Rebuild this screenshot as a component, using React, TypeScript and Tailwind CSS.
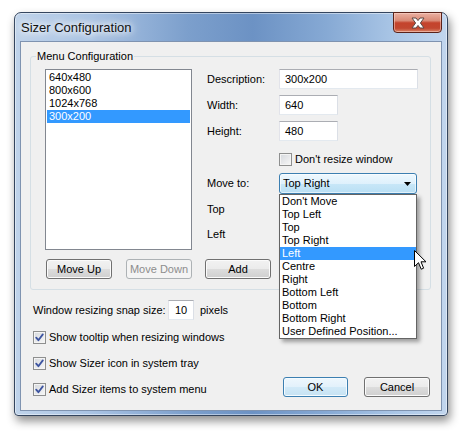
import React from "react";

function CheckBox({ checked }: { checked?: boolean }) {
  return (
    <span className="flex h-[13px] w-[13px] shrink-0 items-center justify-center border border-[#8e8f8f] bg-[linear-gradient(135deg,#d5d8dd,#f7f7f7)] shadow-[inset_0_0_0_1px_#f4f4f4]">
      {checked && (
        <svg width="9" height="9" viewBox="0 0 9 9">
          <path d="M1.2 4.6 L3.4 7.2 L7.8 1.4" fill="none" stroke="#3d54a0" strokeWidth="1.8" strokeLinejoin="round" strokeLinecap="round" />
        </svg>
      )}
    </span>
  );
}

function Btn({ children, kind, className }: { children: React.ReactNode; kind?: "normal" | "disabled" | "default"; className: string }) {
  const k = kind || "normal";
  const base = "flex h-[20px] items-center justify-center rounded-[3px] leading-[13px] ";
  const style =
    k === "disabled"
      ? "border border-[#adb2b5] bg-[#f4f4f4] text-[#8d8d8d]"
      : k === "default"
      ? "border border-[#3c7fb1] bg-[linear-gradient(#eef7fd,#e2f1fb_50%,#d2eaf8_50%,#c6e2f3)] shadow-[inset_0_0_0_1px_#f4fbff] text-black"
      : "border border-[#707070] bg-[linear-gradient(#f2f2f2,#ebebeb_50%,#dddddd_50%,#cfcfcf)] shadow-[inset_0_0_0_1px_#fbfbfb] text-black";
  return <div className={base + style + " " + className}>{children}</div>;
}

function TextBox({ value, className }: { value: string; className: string }) {
  return (
    <div className={"flex h-[20px] items-center border border-[#abadb3] border-l-[#e2e3ea] border-r-[#dbdfe6] border-b-[#e3e9ef] bg-white leading-[13px] " + className}>
      {value}
    </div>
  );
}

export default function App() {
  const sizes = ["640x480", "800x600", "1024x768", "300x200"];
  const moves = [
    "Don't Move",
    "Top Left",
    "Top",
    "Top Right",
    "Left",
    "Centre",
    "Right",
    "Bottom Left",
    "Bottom",
    "Bottom Right",
    "User Defined Position...",
  ];
  return (
    <div className="h-[432px] w-[464px] overflow-hidden bg-white pl-[14px] pt-[12px] font-['Liberation_Sans',Arial,sans-serif] text-[11px] text-black">
      {/* window */}
      <div className="flex h-[404px] w-[434px] flex-col rounded-b-[4px] rounded-t-[7px] border border-[#34455e] bg-[linear-gradient(90deg,#bfd3ea_0%,#a9c3e3_18%,#7c9fcc_40%,#6c92c4_55%,#86a9d4_72%,#aac6e6_88%,#c2d6ee_100%)] shadow-[inset_0_0_0_1px_rgba(255,255,255,0.45),2px_5px_10px_rgba(0,0,0,0.45)]">
        {/* title bar */}
        <div className="flex h-[28px] items-start justify-between">
          <span className="ml-[6px] mt-[7px] text-[13px] leading-[16px] text-[#111] [text-shadow:0_0_6px_#fff,0_0_10px_#fff,0_0_14px_#fff]">
            Sizer Configuration
          </span>
          <div className="-mt-px mr-[5px] flex h-[21px] w-[49px] items-center justify-center rounded-b-[4px] border border-[#5a2219] bg-[linear-gradient(#eab0a2,#d98a76_40%,#c4432c_52%,#c24730_80%,#d98567)] shadow-[inset_0_0_0_1px_rgba(255,220,210,0.5)]">
            <svg width="16" height="12" viewBox="0 0 16 12">
              <path d="M2 1 L6 1 L8 3.6 L10 1 L14 1 L10.4 6 L14 11 L10 11 L8 8.4 L6 11 L2 11 L5.6 6 Z" fill="#fff" stroke="#5d4a46" strokeWidth="1" strokeLinejoin="round" />
            </svg>
          </div>
        </div>
        {/* client area */}
        <div className="mx-[5px] flex h-[370px] w-[422px] flex-col border border-[#7f93b0] bg-[#f0f0f0]">
          {/* group box */}
          <div className="ml-[9px] mt-[14px] flex h-[234px] w-[401px] flex-col rounded-[3px] border border-[#d5dfe5]">
            <span className="-mt-[8px] ml-[5px] w-fit bg-[#f0f0f0] px-[1px] leading-[15px]">Menu Configuration</span>
            <div className="ml-[14px] mt-[5px] flex">
              {/* list box */}
              <div className="h-[181px] w-[147px] border border-[#828790] bg-white p-px">
                {sizes.map((s, i) => (
                  <div key={s} className={i === 3 ? "h-[13px] bg-[#3399ff] pl-[2px] leading-[13px] text-white" : "h-[13px] pl-[2px] leading-[13px]"}>
                    {s}
                  </div>
                ))}
              </div>
              {/* right column */}
              <div className="ml-[15px] flex flex-col">
                <div className="flex h-[20px] items-center">
                  <span className="w-[72px]">Description:</span>
                  <TextBox value="300x200" className="w-[139px] pl-[5px]" />
                </div>
                <div className="mt-[6px] flex h-[20px] items-center">
                  <span className="w-[72px]">Width:</span>
                  <TextBox value="640" className="w-[59px] pl-[5px]" />
                </div>
                <div className="mt-[6px] flex h-[20px] items-center">
                  <span className="w-[72px]">Height:</span>
                  <TextBox value="480" className="w-[59px] pl-[5px]" />
                </div>
                <div className="mt-[12px] flex h-[13px] items-center pl-[72px]">
                  <CheckBox />
                  <span className="ml-[3px] leading-[13px]">Don't resize window</span>
                </div>
                <div className="mt-[7px] flex h-[21px] items-center">
                  <span className="w-[72px]">Move to:</span>
                  <div className="relative">
                    <div className="flex h-[21px] w-[138px] items-center justify-between rounded-[3px] border border-[#3c7fb1] bg-[linear-gradient(#eef8fe,#dff1fc_50%,#c8e7f8_50%,#b9dff4)] pl-[3px] pr-[5px] leading-[13px] shadow-[inset_0_0_0_1px_rgba(255,255,255,0.6)]">
                      <span>Top Right</span>
                      <svg width="7" height="4" viewBox="0 0 7 4">
                        <path d="M0 0 L7 0 L3.5 4 Z" fill="#000" />
                      </svg>
                    </div>
                    {/* dropdown list */}
                    <div className="absolute left-0 top-full z-10 w-[138px] border border-[#646464] bg-white shadow-[3px_3px_4px_rgba(0,0,0,0.35)]">
                      {moves.map((m) => (
                        <div key={m} className={m === "Left" ? "h-[13px] bg-[#3399ff] pl-[2px] leading-[13px] text-white" : "h-[13px] pl-[2px] leading-[13px]"}>
                          {m}
                        </div>
                      ))}
                      <svg className="absolute left-[134px] top-[55px]" width="13" height="21" viewBox="0 0 13 21">
                        <path d="M0.5 0.5 L0.5 16.5 L4.5 12.7 L7.2 19.2 L9.6 18.2 L7 11.8 L12 11.8 Z" fill="#fff" stroke="#000" strokeWidth="1" strokeLinejoin="round" />
                      </svg>
                    </div>
                  </div>
                </div>
                <div className="mt-[5px] flex h-[20px] items-center">
                  <span>Top</span>
                </div>
                <div className="mt-[5px] flex h-[20px] items-center">
                  <span>Left</span>
                </div>
              </div>
            </div>
            <div className="ml-[15px] mt-[9px] flex">
              <Btn className="w-[66px]">Move Up</Btn>
              <Btn kind="disabled" className="ml-[14px] w-[66px]">Move Down</Btn>
              <Btn className="ml-[13px] w-[66px]">Add</Btn>
            </div>
          </div>
          {/* snap row */}
          <div className="ml-[12px] mt-[10px] flex h-[20px] items-center">
            <span className="w-[135px]">Window resizing snap size:</span>
            <TextBox value="10" className="w-[26px] justify-center" />
            <span className="ml-[6px]">pixels</span>
          </div>
          {/* bottom */}
          <div className="mt-[11px] flex items-end justify-between">
            <div className="ml-[12px] flex flex-col gap-[13px]">
              <div className="flex h-[13px] items-center">
                <CheckBox checked />
                <span className="ml-[3px] leading-[13px]">Show tooltip when resizing windows</span>
              </div>
              <div className="flex h-[13px] items-center">
                <CheckBox checked />
                <span className="ml-[3px] leading-[13px]">Show Sizer icon in system tray</span>
              </div>
              <div className="flex h-[13px] items-center">
                <CheckBox checked />
                <span className="ml-[3px] leading-[13px]">Add Sizer items to system menu</span>
              </div>
            </div>
            <div className="-mb-px mr-[11px] flex gap-[16px]">
              <Btn kind="default" className="w-[65px]">OK</Btn>
              <Btn className="w-[66px]">Cancel</Btn>
            </div>
          </div>
        </div>
      </div>
    </div>
  );
}
